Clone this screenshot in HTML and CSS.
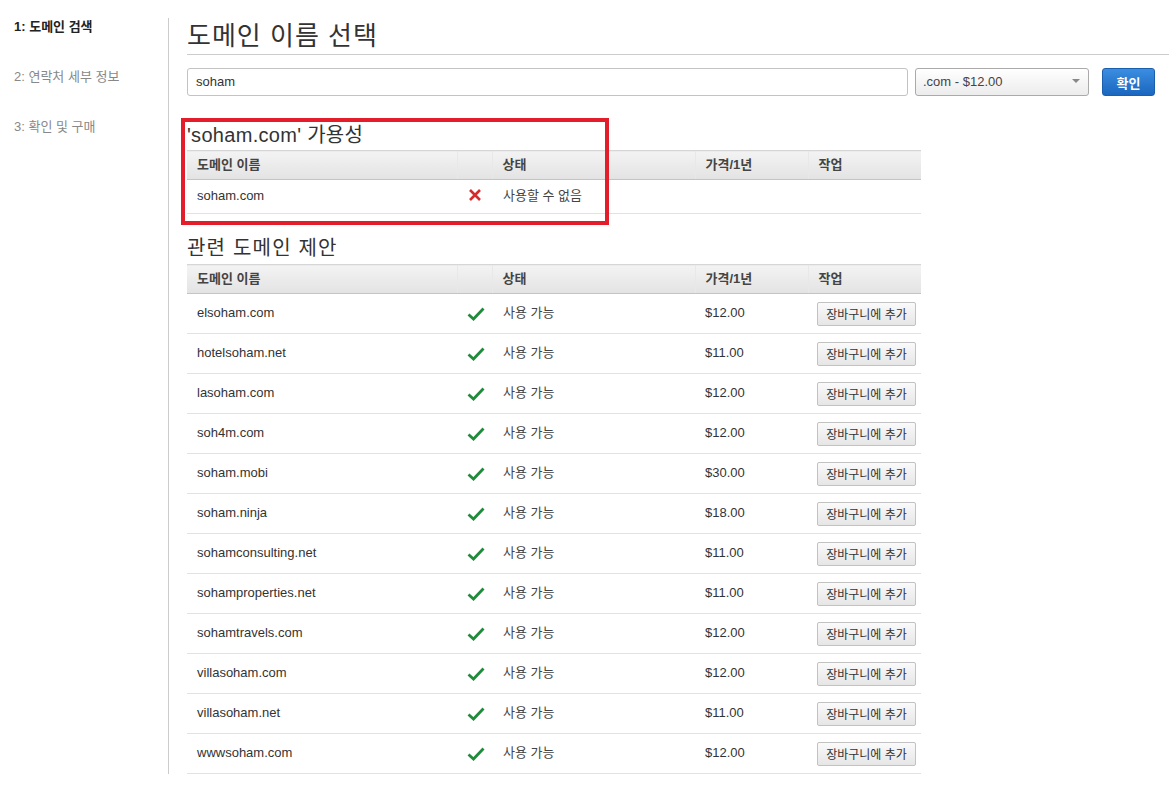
FILE: index.html
```html
<!DOCTYPE html>
<html lang="ko">
<head>
<meta charset="utf-8">
<title>도메인 이름 선택</title>
<link rel="stylesheet" href="styles.css">
</head>
<body>
<div class="page">
  <nav class="steps">
    <div class="step active">1: 도메인 검색</div>
    <div class="step">2: 연락처 세부 정보</div>
    <div class="step">3: 확인 및 구매</div>
  </nav>
  <main class="main">
    <h1 class="title">도메인 이름 선택</h1>
    <div class="search">
      <div class="input">soham</div>
      <div class="select"><span>.com - $12.00</span><span class="caret"></span></div>
      <button class="btn-primary">확인</button>
    </div>

    <section class="avail">
      <h2 class="sub">'soham.com' 가용성</h2>
      <table class="grid">
        <thead>
          <tr><th class="c-name">도메인 이름</th><th class="c-icon"></th><th class="c-status">상태</th><th class="c-price">가격/1년</th><th class="c-act">작업</th></tr>
        </thead>
        <tbody>
          <tr class="short"><td>soham.com</td><td class="icon"><svg width="14" height="14" viewBox="0 0 14 14"><path d="M2 2 L12 12 M12 2 L2 12" stroke="#d52b2b" stroke-width="2.6" stroke-linecap="butt"/></svg></td><td>사용할 수 없음</td><td></td><td></td></tr>
        </tbody>
      </table>
      <div class="highlight"></div>
    </section>

    <section class="related">
      <h2 class="sub">관련 도메인 제안</h2>
      <table class="grid">
        <thead>
          <tr><th class="c-name">도메인 이름</th><th class="c-icon"></th><th class="c-status">상태</th><th class="c-price">가격/1년</th><th class="c-act">작업</th></tr>
        </thead>
        <tbody>
          <tr><td>elsoham.com</td><td class="icon"><svg class="chk" viewBox="0 0 18 14"><path d="M1.5 7.5 L6.5 12 L16.5 1.5" fill="none" stroke="#1e8c3a" stroke-width="2.8"/></svg></td><td>사용 가능</td><td>$12.00</td><td><button class="btn">장바구니에 추가</button></td></tr>
          <tr><td>hotelsoham.net</td><td class="icon"><svg class="chk" viewBox="0 0 18 14"><path d="M1.5 7.5 L6.5 12 L16.5 1.5" fill="none" stroke="#1e8c3a" stroke-width="2.8"/></svg></td><td>사용 가능</td><td>$11.00</td><td><button class="btn">장바구니에 추가</button></td></tr>
          <tr><td>lasoham.com</td><td class="icon"><svg class="chk" viewBox="0 0 18 14"><path d="M1.5 7.5 L6.5 12 L16.5 1.5" fill="none" stroke="#1e8c3a" stroke-width="2.8"/></svg></td><td>사용 가능</td><td>$12.00</td><td><button class="btn">장바구니에 추가</button></td></tr>
          <tr><td>soh4m.com</td><td class="icon"><svg class="chk" viewBox="0 0 18 14"><path d="M1.5 7.5 L6.5 12 L16.5 1.5" fill="none" stroke="#1e8c3a" stroke-width="2.8"/></svg></td><td>사용 가능</td><td>$12.00</td><td><button class="btn">장바구니에 추가</button></td></tr>
          <tr><td>soham.mobi</td><td class="icon"><svg class="chk" viewBox="0 0 18 14"><path d="M1.5 7.5 L6.5 12 L16.5 1.5" fill="none" stroke="#1e8c3a" stroke-width="2.8"/></svg></td><td>사용 가능</td><td>$30.00</td><td><button class="btn">장바구니에 추가</button></td></tr>
          <tr><td>soham.ninja</td><td class="icon"><svg class="chk" viewBox="0 0 18 14"><path d="M1.5 7.5 L6.5 12 L16.5 1.5" fill="none" stroke="#1e8c3a" stroke-width="2.8"/></svg></td><td>사용 가능</td><td>$18.00</td><td><button class="btn">장바구니에 추가</button></td></tr>
          <tr><td>sohamconsulting.net</td><td class="icon"><svg class="chk" viewBox="0 0 18 14"><path d="M1.5 7.5 L6.5 12 L16.5 1.5" fill="none" stroke="#1e8c3a" stroke-width="2.8"/></svg></td><td>사용 가능</td><td>$11.00</td><td><button class="btn">장바구니에 추가</button></td></tr>
          <tr><td>sohamproperties.net</td><td class="icon"><svg class="chk" viewBox="0 0 18 14"><path d="M1.5 7.5 L6.5 12 L16.5 1.5" fill="none" stroke="#1e8c3a" stroke-width="2.8"/></svg></td><td>사용 가능</td><td>$11.00</td><td><button class="btn">장바구니에 추가</button></td></tr>
          <tr><td>sohamtravels.com</td><td class="icon"><svg class="chk" viewBox="0 0 18 14"><path d="M1.5 7.5 L6.5 12 L16.5 1.5" fill="none" stroke="#1e8c3a" stroke-width="2.8"/></svg></td><td>사용 가능</td><td>$12.00</td><td><button class="btn">장바구니에 추가</button></td></tr>
          <tr><td>villasoham.com</td><td class="icon"><svg class="chk" viewBox="0 0 18 14"><path d="M1.5 7.5 L6.5 12 L16.5 1.5" fill="none" stroke="#1e8c3a" stroke-width="2.8"/></svg></td><td>사용 가능</td><td>$12.00</td><td><button class="btn">장바구니에 추가</button></td></tr>
          <tr><td>villasoham.net</td><td class="icon"><svg class="chk" viewBox="0 0 18 14"><path d="M1.5 7.5 L6.5 12 L16.5 1.5" fill="none" stroke="#1e8c3a" stroke-width="2.8"/></svg></td><td>사용 가능</td><td>$11.00</td><td><button class="btn">장바구니에 추가</button></td></tr>
          <tr><td>wwwsoham.com</td><td class="icon"><svg class="chk" viewBox="0 0 18 14"><path d="M1.5 7.5 L6.5 12 L16.5 1.5" fill="none" stroke="#1e8c3a" stroke-width="2.8"/></svg></td><td>사용 가능</td><td>$12.00</td><td><button class="btn">장바구니에 추가</button></td></tr>
        </tbody>
      </table>
    </section>
  </main>
</div>
</body>
</html>
```

FILE: styles.css
```css
* { box-sizing: border-box; }
html, body { margin: 0; padding: 0; background: #fff; }
body {
  font-family: "Liberation Sans", "Noto Sans CJK KR", Arial, sans-serif;
  font-size: 13px;
  color: #333;
}
.page {
  display: flex;
  margin-top: 18px;
}
.steps {
  width: 168px;
  flex: none;
  padding-left: 14px;
}
.step {
  line-height: 18px;
  height: 18px;
  margin-bottom: 32px;
  color: #888;
  font-size: 13px;
}
.step.active { color: #222; font-weight: bold; }
.main {
  flex: 1;
  border-left: 1px solid #ccc;
  padding-left: 18px;
}
.title {
  margin: 0;
  font-size: 26px;
  font-weight: normal;
  line-height: 34px;
  padding-top: 1px;
  padding-bottom: 1px;
  border-bottom: 1px solid #ccc;
  color: #333;
  letter-spacing: 1px;
}
.search {
  display: flex;
  align-items: center;
  margin-top: 13px;
  padding-right: 14px;
}
.input {
  flex: 1;
  height: 28px;
  border: 1px solid #c3c3c3;
  border-radius: 3px;
  padding: 0 8px;
  line-height: 26px;
  color: #333;
  font-size: 13px;
}
.select {
  width: 174px;
  height: 28px;
  margin-left: 7px;
  border: 1px solid #aaa;
  border-radius: 3px;
  background: linear-gradient(#ffffff, #ececec);
  display: flex;
  align-items: center;
  justify-content: space-between;
  padding: 0 8px 2px 7px;
  color: #444;
}
.caret {
  width: 0; height: 0;
  border-left: 4px solid transparent;
  border-right: 4px solid transparent;
  border-top: 4px solid #888;
}
.btn-primary {
  margin-left: 13px;
  width: 53px;
  height: 28px;
  border: 1px solid #1a5fae;
  border-radius: 3px;
  background: linear-gradient(#3a8ee0, #1b67bf);
  color: #fff;
  font-family: inherit;
  font-weight: bold;
  font-size: 13px;
  padding: 0;
}
.avail {
  position: relative;
  margin-top: 26px;
}
.related { margin-top: 21px; }
.sub {
  margin: 0 0 2px;
  font-size: 20px;
  font-weight: normal;
  line-height: 26px;
  color: #333;
  letter-spacing: 0.3px;
}
.related .sub { margin-bottom: 3px; letter-spacing: 1.2px; }
.grid {
  width: 734px;
  border-collapse: collapse;
  table-layout: fixed;
}
.grid th {
  height: 29px;
  background: linear-gradient(#f3f3f3, #e3e3e3);
  border-top: 1px solid #d6d6d6;
  border-bottom: 1px solid #c4c4c4;
  border-left: 1px solid #e8e8e8;
  text-align: left;
  font-weight: bold;
  color: #444;
  font-size: 13px;
  padding: 0 10px 3px;
}
.grid th:first-child { border-left: none; }
.c-name { width: 270px; }
.c-icon { width: 35px; }
.c-status { width: 203px; }
.c-price { width: 113px; }
.c-act { width: 113px; }
.grid td {
  height: 40px;
  border-bottom: 1px solid #e2e2e2;
  padding: 0 10px 2px;
  color: #333;
  font-size: 13px;
}
.grid td:nth-child(3) { padding-left: 11px; padding-bottom: 4px; color: #444; }
.grid td:nth-child(5) { padding-left: 9px; padding-bottom: 0; }
.grid tr.short td { height: 34px; padding-bottom: 3px; }
.grid tr.short td:nth-child(3) { padding-bottom: 5px; }
.grid td.icon { padding: 0; text-align: center; line-height: 0; }
.grid td.icon svg { display: inline-block; vertical-align: middle; }
.chk { width: 18px; height: 14px; margin-left: 2px; }
.btn {
  width: 99px;
  height: 24px;
  border: 1px solid #c2c2c2;
  border-radius: 2px;
  background: linear-gradient(#fafafa, #e6e6e6);
  font-family: inherit;
  font-size: 12px;
  color: #333;
  padding: 0;
}
.highlight {
  position: absolute;
  left: -6px;
  top: -4px;
  width: 428px;
  height: 107px;
  border: 4px solid #e31e2a;
  pointer-events: none;
}
```
